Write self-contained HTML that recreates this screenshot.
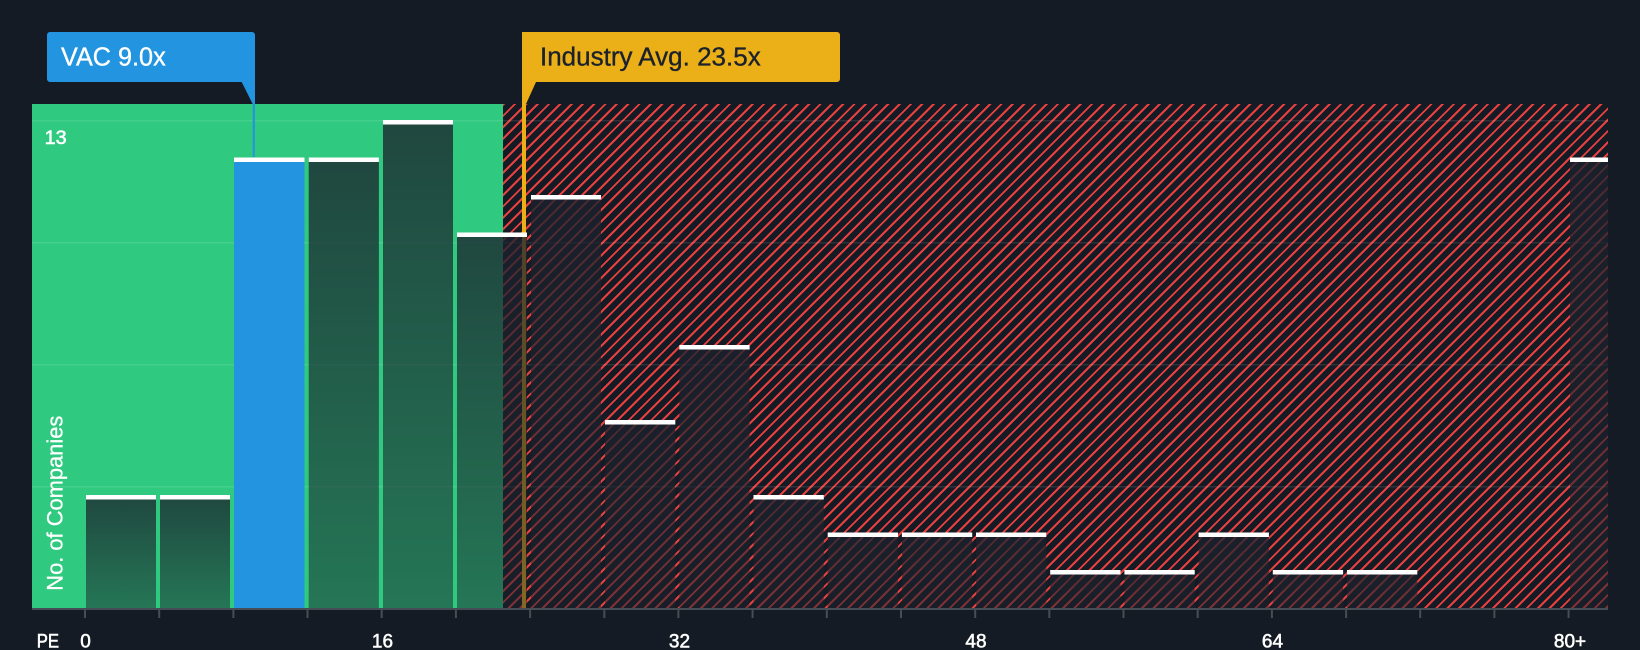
<!DOCTYPE html>
<html><head><meta charset="utf-8"><style>
html,body{margin:0;padding:0;background:#151b24;width:1640px;height:650px;overflow:hidden}
svg{display:block;position:absolute;left:0;top:0}
#h{position:absolute;left:503px;top:104px;width:1105px;height:504px;background:repeating-linear-gradient(135deg,#e8403f -0.5px,#e8403f 1.5px,transparent 1.5px,transparent 7.5px)}
text{font-family:"Liberation Sans",sans-serif}
.n{fill:#fff;font-size:19px;stroke:#fff;stroke-width:.55px}
</style></head><body>
<div id="h"></div>
<svg width="1640" height="650" viewBox="0 0 1640 650" xmlns="http://www.w3.org/2000/svg">
<defs>
<linearGradient id="g" x1="0" y1="0" x2="0" y2="1">
<stop offset="0" stop-color="#1b222d" stop-opacity=".78"/>
<stop offset="1" stop-color="#1b222d" stop-opacity=".5"/>
</linearGradient>
</defs>
<rect x="32" y="104" width="471" height="504" fill="#2fca7f"/>
<g fill="#fff" fill-opacity=".1">
<rect x="32" y="120" width="1576" height="1.5"/>
<rect x="32" y="242" width="1576" height="1.5"/>
<rect x="32" y="364" width="1576" height="1.5"/>
<rect x="32" y="486" width="1576" height="1.5"/>
</g>
<rect x="522" y="32" width="4" height="576" fill="#ebb017"/>
<path d="M525 32H837a3 3 0 0 1 3 3V79a3 3 0 0 1-3 3H536L526 104H522V35a3 3 0 0 1 3-3Z" fill="#ebb017"/>
<path d="M50 32H252a3 3 0 0 1 3 3V104L254.7 157H252.7V104L241.7 82H50a3 3 0 0 1-3-3V35a3 3 0 0 1 3-3Z" fill="#2394e0"/>
<g fill="url(#g)">
<rect x="86" y="495" width="70" height="113"/>
<rect x="160" y="495" width="70" height="113"/>
<rect x="308.7" y="157.5" width="70.2" height="450.5"/>
<rect x="383" y="120" width="70" height="488"/>
<rect x="457" y="232.5" width="70" height="375.5"/>
<rect x="531" y="195" width="70" height="413"/>
<rect x="605" y="420" width="70.3" height="188"/>
<rect x="679.3" y="345" width="70.3" height="263"/>
<rect x="753.5" y="495" width="70.3" height="113"/>
<rect x="827.7" y="532.5" width="70.3" height="75.5"/>
<rect x="901.9" y="532.5" width="70.3" height="75.5"/>
<rect x="976" y="532.5" width="70.3" height="75.5"/>
<rect x="1050.2" y="570" width="70.3" height="38"/>
<rect x="1124.4" y="570" width="70.3" height="38"/>
<rect x="1198.6" y="532.5" width="70.3" height="75.5"/>
<rect x="1272.8" y="570" width="70.3" height="38"/>
<rect x="1347" y="570" width="70.3" height="38"/>
<rect x="1570" y="157.5" width="38" height="450.5"/>
</g>
<rect x="234" y="157.5" width="70.5" height="450.5" fill="#2394e0"/>
<g fill="#fff">
<rect x="86" y="495" width="70" height="4.5"/>
<rect x="160" y="495" width="70" height="4.5"/>
<rect x="234" y="157.5" width="70.5" height="4.5"/>
<rect x="308.7" y="157.5" width="70.2" height="4.5"/>
<rect x="383" y="120" width="70" height="4.5"/>
<rect x="457" y="232.5" width="70" height="4.5"/>
<rect x="531" y="195" width="70" height="4.5"/>
<rect x="605" y="420" width="70.3" height="4.5"/>
<rect x="679.3" y="345" width="70.3" height="4.5"/>
<rect x="753.5" y="495" width="70.3" height="4.5"/>
<rect x="827.7" y="532.5" width="70.3" height="4.5"/>
<rect x="901.9" y="532.5" width="70.3" height="4.5"/>
<rect x="976" y="532.5" width="70.3" height="4.5"/>
<rect x="1050.2" y="570" width="70.3" height="4.5"/>
<rect x="1124.4" y="570" width="70.3" height="4.5"/>
<rect x="1198.6" y="532.5" width="70.3" height="4.5"/>
<rect x="1272.8" y="570" width="70.3" height="4.5"/>
<rect x="1347" y="570" width="70.3" height="4.5"/>
<rect x="1570" y="157.5" width="38" height="4.5"/>
</g>
<rect x="32" y="608" width="1576" height="2" fill="#484c54"/>
<g fill="#484c54">
<rect x="84" y="610" width="2" height="8"/><rect x="158.2" y="610" width="2" height="8"/><rect x="232.4" y="610" width="2" height="8"/><rect x="306.5" y="610" width="2" height="8"/><rect x="380.7" y="610" width="2" height="8"/>
<rect x="454.9" y="610" width="2" height="8"/><rect x="529.1" y="610" width="2" height="8"/><rect x="603.3" y="610" width="2" height="8"/><rect x="677.4" y="610" width="2" height="8"/><rect x="751.6" y="610" width="2" height="8"/>
<rect x="825.8" y="610" width="2" height="8"/><rect x="900" y="610" width="2" height="8"/><rect x="974.2" y="610" width="2" height="8"/><rect x="1048.3" y="610" width="2" height="8"/><rect x="1122.5" y="610" width="2" height="8"/>
<rect x="1196.7" y="610" width="2" height="8"/><rect x="1270.9" y="610" width="2" height="8"/><rect x="1345.1" y="610" width="2" height="8"/><rect x="1419.2" y="610" width="2" height="8"/><rect x="1493.4" y="610" width="2" height="8"/><rect x="1567.6" y="610" width="2" height="8"/>
</g>
<text x="61" y="65.7" font-size="25.5" fill="#fff" stroke="#fff" stroke-width=".35" textLength="104.7" lengthAdjust="spacingAndGlyphs">VAC 9.0x</text>
<text x="540" y="65.7" font-size="25.5" fill="#1b222d" stroke="#1b222d" stroke-width=".35" textLength="220.7" lengthAdjust="spacingAndGlyphs">Industry Avg. 23.5x</text>
<text class="n" x="44.7" y="144" textLength="22" lengthAdjust="spacingAndGlyphs">13</text>
<text transform="translate(62.3 590.7) rotate(-90)" font-size="22.5" fill="#fff" stroke="#fff" stroke-width=".3" textLength="175" lengthAdjust="spacingAndGlyphs">No. of Companies</text>
<text class="n" x="36.7" y="647.3" textLength="22.3" lengthAdjust="spacingAndGlyphs">PE</text>
<text class="n" x="85.5" y="647.3" text-anchor="middle">0</text>
<text class="n" x="382.5" y="647.3" text-anchor="middle">16</text>
<text class="n" x="679.5" y="647.3" text-anchor="middle">32</text>
<text class="n" x="976" y="647.3" text-anchor="middle">48</text>
<text class="n" x="1272.5" y="647.3" text-anchor="middle">64</text>
<text class="n" x="1570" y="647.3" text-anchor="middle">80+</text>
</svg>
</body></html>
